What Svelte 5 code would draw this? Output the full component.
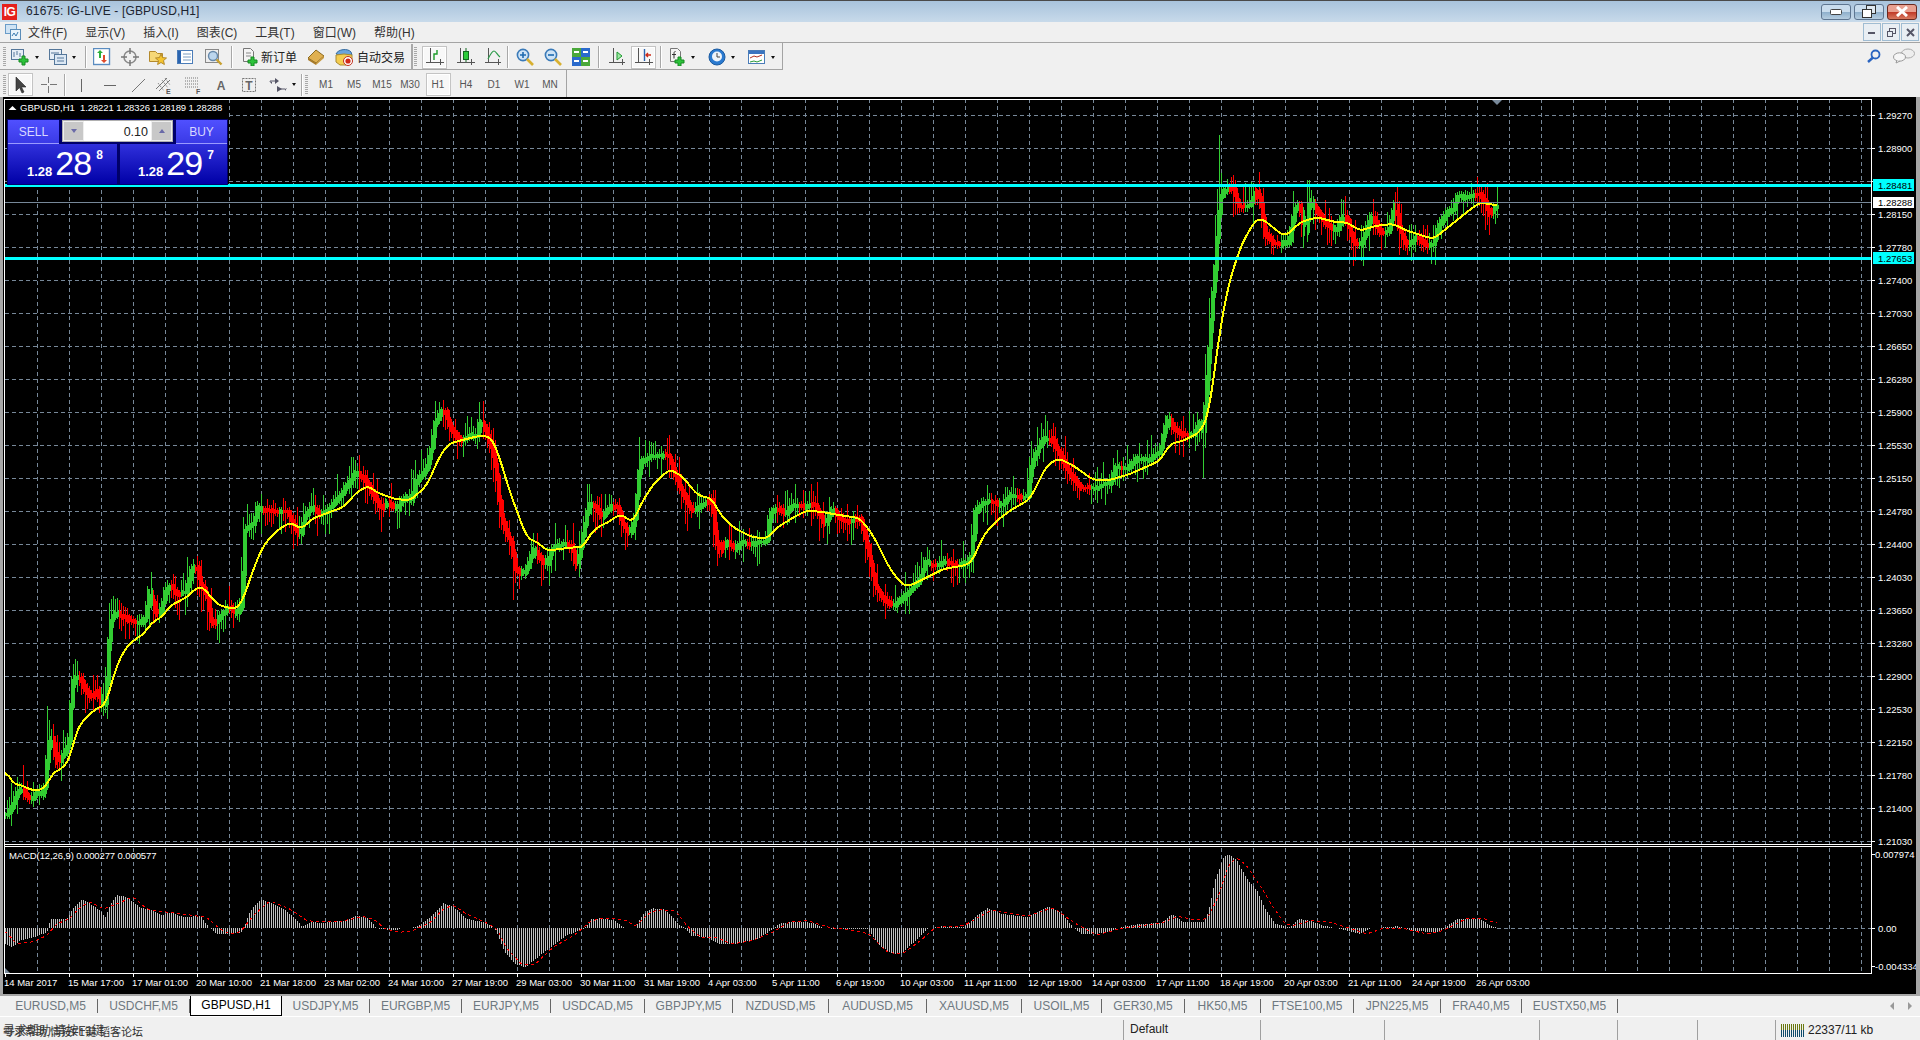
<script>
  function seg(ox, oy, sx, sy, a) {
    const r = [];
    for (let i = 0; i < a.length; i += 2) r.push([ox + a[i] / sx, oy + a[i + 1] / sy]);
    return r;
  }
  function interp(pts) {
    return (x) => {
      if (x <= pts[0][0]) return pts[0][1];
      for (let i = 1; i < pts.length; i++) {
        if (x <= pts[i][0]) {
          const [x0, y0] = pts[i - 1], [x1, y1] = pts[i];
          return y0 + ((y1 - y0) * (x - x0)) / Math.max(x1 - x0, 0.001);
        }
      }
      return pts[pts.length - 1][1];
    };
  }
  let seed = 20170426;
  function rnd() {
    seed = (seed + 0x6d2b79f5) | 0;
    let t = Math.imul(seed ^ (seed >>> 15), 1 | seed);
    t = (t + Math.imul(t ^ (t >>> 7), 61 | t)) ^ t;
    return ((t ^ (t >>> 14)) >>> 0) / 4294967296;
  }

  const pricePts = [
    ...seg(0, 480, 3, 3, [15,1010,25,1005,35,985,50,945,65,930,80,955,95,960,110,940,125,945,135,920,142,830,150,760,160,800,170,850,185,835,200,810,210,770,215,620,225,595,240,600,255,635,275,655,290,630,305,680,318,670,325,520,330,430,345,400,360,410,380,420,400,430,420,430,437,415,447,335,458,370,468,410,485,390,497,330,510,320,530,345,555,340,575,270,590,265,600,310,620,350,635,440,650,425,670,400,685,385,710,405,725,370,735,150,760,135,772,85,790,95,830,100,860,95,875,130,900,175,915,110,935,85,955,105,975,95,1000,70,1020,50,1050,5]),
    [355,472],[363,478],[370,490],[380,510],[387,503],[397,510],
    ...seg(400, 380, 3, 3, [0,370,20,355,35,370,45,310,60,295,80,265,95,200,105,130,125,95,135,100,150,150,175,185,195,180,215,165,230,175,240,120,255,155,275,210,290,290,300,400,315,455,335,500,345,570,370,590,385,560,400,510,420,540,440,560,455,510,490,500,515,500,530,570,545,490,565,375,585,385,605,420,625,390,650,380,670,440,690,465,705,420,720,250,745,235,775,235,805,230,825,290,850,350,875,395,895,385]),
    ...seg(700, 400, 3, 3, [0,320,35,300,45,400,55,460,75,430,95,440,110,450,125,425,150,435,175,425,200,425,210,340,230,325,255,345,275,320,300,320,320,325,345,315,360,350,375,375,395,330,420,360,450,370,480,360,495,420,510,490,525,560,550,600,580,620,600,600,630,575,660,540,675,490,700,500,735,490,770,500,800,490,815,470,825,340,850,310,880,310,905,320,930,290,950,290,980,300,995,190,1030,120,1055,120,1080,170,1105,220,1140,265,1180,265,1230,250,1245,205,1280,210,1310,180,1340,185,1380,160,1400,60,1420,90,1450,110,1480,105,1500,60,1510,100]),
    ...seg(1150, 120, 3, 3, [185,570,195,450,205,300,215,220,240,210,250,210,265,260,300,260,320,210,335,270,345,350,370,375,395,375,415,370,435,270,450,260,465,345,480,240,500,280,530,320,560,335,575,295,590,300,610,370,630,380,650,330,665,285,690,340,715,340,735,260,750,340,770,380,800,350,825,380,850,375,865,320,890,280,910,270,920,230,945,235,985,225,1005,250,1015,290,1035,260])
  ];
  const maPts = [
    ...seg(0, 480, 3, 3, [15,870,30,900,45,917,65,918,90,932,120,935,140,920,155,885,190,865,210,840,225,770,240,735,265,710,290,687,315,680,330,630,350,560,375,510,400,485,437,460,450,435,490,410,510,380,560,355,595,322,615,330,640,365,665,382,710,390,730,360,760,270,790,200,830,155,870,130,905,150,935,120,1000,95,1030,85,1070,40,1105,20,1130,40,1190,62]),
    ...seg(400, 380, 3, 3, [0,360,30,365,80,320,120,230,145,195,180,185,240,170,275,175,300,240,330,340,380,475,420,495,440,515,520,505,550,505,570,465,600,440,625,430,660,405,700,430,720,380,760,315,810,270,850,295,885,340,900,350]),
    ...seg(700, 400, 3, 3, [0,292,35,298,60,345,100,385,150,412,200,420,225,390,280,355,320,335,360,338,400,345,480,358,520,410,570,510,610,560,630,560,680,535,730,510,790,500,815,490,850,410,890,365,930,335,990,300,1040,200,1075,178,1120,200,1180,243,1230,243,1290,225,1380,185,1410,135,1450,125,1500,100,1525,50]),
    ...seg(1150, 120, 3, 3, [215,600,240,480,275,375,315,305,335,298,400,350,415,345,450,310,500,295,560,310,590,310,630,335,680,320,730,315,770,335,850,360,900,320,950,280,990,250,1035,258])
  ];
  const histPts = [
    ...seg(0, 830, 3, 3, [15,345,35,355,60,335,100,325,140,310,150,270,200,270,220,235,245,210,270,225,300,245,315,265,330,225,350,198,380,205,420,235,460,245,485,258,510,250,550,265,600,260,625,295,650,315,680,315,725,310,750,245,780,212,810,220,850,240,880,265,905,292,935,278,960,282,1000,278,1040,275,1065,260,1100,265,1130,298,1190,305]),
    ...seg(400, 840, 1.96, 3, [0,268,30,265,50,245,65,225,85,192,105,205,130,240,165,250,185,268,205,340,225,375,245,385,265,360,290,330,325,290,360,270,375,240,395,238,420,245,440,268,460,268,475,225,495,208,520,212,545,255,560,270,570,290,600,295,625,315,660,315,700,300,730,270,745,252,790,248,815,255,830,268,880,270,915,270,940,320,965,345,985,340,1020,290,1035,268,1060,262,1105,265,1130,230,1150,208,1180,225,1230,235,1270,202,1295,220,1320,268,1335,285,1365,285,1395,275,1410,265,1450,255,1490,252]),
    ...seg(1150, 830, 3, 3, [0,285,30,285,65,255,100,280,160,280,175,245,195,150,220,85,235,75,260,95,290,150,320,185,345,240,375,285,420,295,445,270,480,275,520,290,560,298,630,315,660,298,740,292,790,305,860,310,885,295,920,270,990,270,1020,290,1040,297])
  ];
  const sigPts = [
    ...seg(0, 830, 3, 3, [15,305,50,345,100,338,140,320,170,285,210,268,240,235,270,218,310,240,350,225,400,203,440,240,490,248,550,255,620,265,660,300,690,315,720,310,760,260,810,215,870,240,920,275,960,278,1030,276,1090,262,1130,275,1150,298,1190,308]),
    ...seg(400, 840, 1.96, 3, [0,280,25,275,60,250,85,210,105,198,130,225,165,248,190,270,210,330,240,378,265,375,300,325,345,285,375,245,400,238,440,242,462,262,490,220,510,212,540,215,565,265,590,295,620,295,650,315,690,305,730,280,765,248,800,245,840,265,880,272,920,285,955,340,985,345,1020,305,1050,265,1105,260,1160,212,1230,232,1280,205,1320,250,1365,288,1410,270,1490,252]),
    ...seg(1150, 830, 3, 3, [0,285,40,280,85,262,130,272,170,270,200,215,235,110,260,85,290,110,330,170,370,235,405,285,430,290,480,275,540,280,600,298,650,315,700,298,760,298,830,315,880,305,950,268,1000,268,1030,280])
  ];

  const py = interp(pricePts), my = interp(maPts), hy = interp(histPts), sy = interp(sigPts);
  const spikes = { 1219: [136, 0], 1203: [0, 479], 1353: [0, 267], 47: [707, 0], 409: [0, 517], 513: [0, 601] };
  let gBody = '', gWick = '', rBody = '', rWick = '';
  let up = true;
  let drift = 0;
  const START = 5, END = 1497;
  for (let x = START; x <= END; x += 2) {
    drift += (rnd() - 0.5) * 1.4;
    drift *= 0.85;
    const a = py(x - 2) + drift, b = py(x + 2) + drift;
    const d = py(x + 6) - py(x - 6);
    if (d < -0.6) up = true;
    else if (d > 0.6) up = false;
    else if (rnd() < 0.08) up = !up;
    const top = Math.round(Math.min(a, b) - 1 - rnd() * 2);
    const bot = Math.round(Math.max(a, b) + 1 + rnd() * 2);
    const r1 = rnd(), r2 = rnd();
    let wt = Math.round(top - 1 - r1 * r1 * r1 * 20 - rnd() * 2);
    let wb = Math.round(bot + 1 + r2 * r2 * r2 * 20 + rnd() * 2);
    for (const k of [x, x + 1]) {
      if (spikes[k]) {
        if (spikes[k][0]) wt = spikes[k][0];
        if (spikes[k][1]) wb = spikes[k][1];
      }
    }
    const body = `M${x + 1} ${top}V${bot}`;
    const wick = `M${x + 0.5} ${wt}V${wb}`;
    if (up) { gBody += body; gWick += wick; }
    else { rBody += body; rWick += wick; }
  }

  function smooth(fn, x0, x1, step, win) {
    const raw = [];
    for (let x = x0; x <= x1; x += step) raw.push(fn(x));
    return raw.map((_, i) => {
      let s = 0, n = 0;
      for (let j = Math.max(0, i - win); j <= Math.min(raw.length - 1, i + win); j++) { s += raw[j]; n++; }
      return `${x0 + i * step},${(s / n).toFixed(1)}`;
    }).join(' ');
  }
  const maLine = smooth(my, START, END, 2, 2);
  const sigLine = smooth(sy, START, END, 2, 1);

  let hist = '';
  for (let x = START; x <= END; x += 2) {
    const v = Math.round(hy(x));
    if (v === 929) continue;
    hist += `M${x + 0.5} 929V${v}`;
  }

  const vGrid = [];
  for (let x = 5 + 32; x < 1871; x += 32) vGrid.push(x + 0.5);
  const prices = ['1.29270','1.28900','1.28520','1.28150','1.27780','1.27400','1.27030','1.26650','1.26280','1.25900','1.25530','1.25150','1.24780','1.24400','1.24030','1.23650','1.23280','1.22900','1.22530','1.22150','1.21780','1.21400','1.21030'];
  const times = ['14 Mar 2017','15 Mar 17:00','17 Mar 01:00','20 Mar 10:00','21 Mar 18:00','23 Mar 02:00','24 Mar 10:00','27 Mar 19:00','29 Mar 03:00','30 Mar 11:00','31 Mar 19:00','4 Apr 03:00','5 Apr 11:00','6 Apr 19:00','10 Apr 03:00','11 Apr 11:00','12 Apr 19:00','14 Apr 03:00','17 Apr 11:00','18 Apr 19:00','20 Apr 03:00','21 Apr 11:00','24 Apr 19:00','26 Apr 03:00'];
  const tabNames = ['EURUSD,M5','USDCHF,M5','GBPUSD,H1','USDJPY,M5','EURGBP,M5','EURJPY,M5','USDCAD,M5','GBPJPY,M5','NZDUSD,M5','AUDUSD,M5','XAUUSD,M5','USOIL,M5','GER30,M5','HK50,M5','FTSE100,M5','JPN225,M5','FRA40,M5','EUSTX50,M5'];
  const tabEdges = [4,98,190,282,370,462,551,645,733,829,927,1022,1102,1185,1261,1354,1441,1522,1618];
  const tabs = tabNames.map((name, i) => ({ name, width: tabEdges[i + 1] - tabEdges[i] }));
  const menus = ['文件(F)','显示(V)','插入(I)','图表(C)','工具(T)','窗口(W)','帮助(H)'];
  const periods = ['M1','M5','M15','M30','H1','H4','D1','W1','MN'];
  const netBars = [0,1,2,3,4,5,6,7,8,9,10,11];
</script>

<div class="app">
  <header class="title">
    <span class="logo">IG</span>
    <span class="ttext">61675: IG-LIVE - [GBPUSD,H1]</span>
    <span class="wbtns">
      <span class="wb"><svg width="12" height="6"><rect x="0.5" y="0.5" width="11" height="5" rx="1" fill="#fff" stroke="#444"/></svg></span>
      <span class="wb"><svg width="14" height="13"><rect x="4.5" y="0.5" width="9" height="8" fill="#dfe8f0" stroke="#333"/><rect x="0.5" y="4.5" width="9" height="8" fill="#fff" stroke="#333"/></svg></span>
      <span class="wb close"><svg width="14" height="11"><path d="M2 1l10 9M12 1L2 10" stroke="#fff" stroke-width="3"/></svg></span>
    </span>
  </header>

  <nav class="menu">
    <svg class="micon" width="16" height="16" viewBox="0 0 16 16"><rect x="0.5" y="0.5" width="11" height="9" fill="#cfe3f4" stroke="#6a9cc8"/><rect x="5.5" y="5.5" width="10" height="10" fill="#eaf3fb" stroke="#5a8cb8"/><path d="M7 12l2-3 2 3 2-4" fill="none" stroke="#3a7ab0"/></svg>
    <div class="mitems">
      {#each menus as m}<span>{m}</span>{/each}
    </div>
    <div class="mdi">
      <span class="mb"><svg width="8" height="3"><rect width="7" height="2" y="1" fill="#556"/></svg></span>
      <span class="mb"><svg width="9" height="9"><rect x="2.5" y="0.5" width="6" height="5" fill="none" stroke="#556"/><rect x="0.5" y="3.5" width="5" height="5" fill="#e8eef4" stroke="#556"/></svg></span>
      <span class="mb"><svg width="9" height="9"><path d="M1 1l7 7M8 1L1 8" stroke="#556" stroke-width="2"/></svg></span>
    </div>
  </nav>

  <div class="row r1">
    <div class="tb tb1">
      <i class="grip"></i>
      <svg class="ic" viewBox="0 0 18 18"><rect x="0.5" y="1.5" width="12" height="10" fill="#e6eef6" stroke="#55779a"/><path d="M3 4v5M6 3v4M9 5v4" stroke="#55779a"/><path d="M10 8h3v3h3v3h-3v3h-3v-3H7v-3h3z" transform="translate(1 0)" fill="#2cc23a" stroke="#178a22"/></svg>
      <i class="drop l4"></i>
      <svg class="ic" viewBox="0 0 18 18"><rect x="0.5" y="1.5" width="12" height="10" fill="#e6eef6" stroke="#55779a"/><rect x="5.5" y="6.5" width="12" height="10" fill="#dce8f4" stroke="#55779a"/><path d="M2 5h8M8 10h7M8 13h7" stroke="#55779a"/></svg>
      <i class="drop l5"></i>
      <i class="sep"></i>
      <svg class="ic" viewBox="0 0 18 18"><rect x="0.5" y="0.5" width="16" height="16" fill="#fff" stroke="#5a8cc0" stroke-width="1.4"/><path d="M6 10V5H4l3-3 3 3H8v5z" fill="#2cb03a"/><path d="M10 7v5H8l3 3 3-3h-2V7z" fill="#e04a2a"/></svg>
      <svg class="ic" viewBox="0 0 18 18"><circle cx="9" cy="9" r="6" fill="none" stroke="#8a8a8a" stroke-width="1.5"/><path d="M9 0v6M9 12v6M0 9h6M12 9h6" stroke="#777" stroke-width="1.5"/></svg>
      <svg class="ic" viewBox="0 0 18 18"><path d="M0.5 3.5h6l2 2h5v8h-13z" fill="#f6d878" stroke="#b48a2c"/><path d="M12 6l1.6 3.6 3.9.4-3 2.6.9 3.9-3.4-2-3.4 2 .9-3.9-3-2.6 3.9-.4z" fill="#f4c430" stroke="#b48a2c"/></svg>
      <svg class="ic" viewBox="0 0 18 18"><rect x="0.5" y="2.5" width="15" height="13" fill="#fff" stroke="#4a7cb8"/><rect x="1" y="3" width="3" height="12" fill="#2a64b0"/><path d="M6 6h8M6 9h8M6 12h8" stroke="#7a9cc0"/></svg>
      <svg class="ic" viewBox="0 0 18 18"><rect x="0.5" y="1.5" width="13" height="13" fill="#eee" stroke="#888"/><circle cx="8" cy="8" r="4.5" fill="#bcd6ee" stroke="#6688aa" stroke-width="1.4"/><path d="M11.5 11.5l5 5" stroke="#c8a030" stroke-width="2.4"/></svg>
      <i class="sep s2"></i>
      <svg class="ic" viewBox="0 0 18 18"><path d="M1.5 0.5h7l3 3v10h-10z" fill="#f4f4f4" stroke="#777"/><path d="M4 5h5M4 8h5" stroke="#888"/><path d="M9 9h3v3h3v3h-3v3H9v-3H6v-3h3z" fill="#2cc23a" stroke="#178a22"/></svg>
      <span class="tlabel l9">新订单</span>
      <svg class="ic" viewBox="0 0 18 18"><path d="M1 10l8-8 8 6-8 7z" fill="#e0b050" stroke="#8a6a20"/><path d="M1 10l8 5v2l-8-5z" fill="#a87a28"/><path d="M9 15l8-7v2l-8 7z" fill="#c89a40"/></svg>
      <svg class="ic" viewBox="0 0 18 18"><path d="M1 6c2-5 12-6 15-2l1 3-8 1z" fill="#6aa4dc" stroke="#346a9e"/><path d="M1 7l8-1 8 1v7l-6 3H5l-4-3z" fill="#f4cd50" stroke="#a88a30"/><circle cx="13" cy="13" r="4.5" fill="#fff" stroke="#c03020"/><circle cx="13" cy="13" r="2.6" fill="#d02818"/></svg>
      <span class="tlabel l6">自动交易</span>
      <i class="tbend"></i>
      <i class="grip l9"></i>
      <span class="on l5"><svg class="ic" viewBox="0 0 18 18"><path d="M4.5 0v15M0 14.5h18M14.5 11v6" stroke="#555" fill="none"/><path d="M8 12V6h3V2" stroke="#1a9a28" stroke-width="1.4" fill="none"/></svg></span>
      <svg class="ic" viewBox="0 0 18 18"><path d="M3.5 0v15M0 14.5h18M14.5 11v6" stroke="#555" fill="none"/><rect x="6.5" y="3.5" width="5" height="8" fill="#2ccc3a" stroke="#136a20"/><path d="M9 0v3M9 12v2" stroke="#136a20"/></svg>
      <svg class="ic" viewBox="0 0 18 18"><path d="M3.5 0v15M0 14.5h16M13.5 11v6" stroke="#555" fill="none"/><path d="M3 11c2-4 4-8 6-8s3 4 6 6" stroke="#2a9a48" stroke-width="1.2" fill="none"/></svg>
      <i class="sep s3"></i>
      <svg class="ic" viewBox="0 0 18 18"><circle cx="7" cy="7" r="5.6" fill="#cfe4f6" stroke="#3a7ab8" stroke-width="1.6"/><path d="M4 7h6M7 4v6" stroke="#1e6ab0" stroke-width="1.6"/><path d="M11 11l6 6" stroke="#d8b030" stroke-width="2.6"/></svg>
      <svg class="ic" viewBox="0 0 18 18"><circle cx="7" cy="7" r="5.6" fill="#cfe4f6" stroke="#3a7ab8" stroke-width="1.6"/><path d="M4 7h6" stroke="#1e6ab0" stroke-width="1.6"/><path d="M11 11l6 6" stroke="#d8b030" stroke-width="2.6"/></svg>
      <svg class="ic" viewBox="0 0 18 18"><rect x="0" y="0" width="9" height="9" fill="#4aa83a"/><rect x="9" y="0" width="9" height="9" fill="#2a6acc"/><rect x="0" y="9" width="9" height="9" fill="#2a6acc"/><rect x="9" y="9" width="9" height="9" fill="#4aa83a"/><path d="M2 4h5M11 4h5M2 13h5M11 13h5" stroke="#fff" stroke-width="2"/></svg>
      <i class="sep s2"></i>
      <svg class="ic" viewBox="0 0 18 18"><path d="M4.5 0v15M0 14.5h16M13.5 11v6" stroke="#555" fill="none"/><path d="M8 4l5 4-5 4z" fill="#9ee8a4" stroke="#1e9a30"/></svg>
      <span class="on l6"><svg class="ic" viewBox="0 0 18 18"><path d="M3.5 0v15M0 14.5h18M14.5 11v6" stroke="#555" fill="none"/><path d="M9.5 1v12" stroke="#2a64b0" stroke-width="1.4"/><path d="M11 7h5M13 5l-2 2 2 2" stroke="#cc2a18" stroke-width="1.4" fill="none"/></svg></span>
      <i class="sep s3"></i>
      <svg class="ic" viewBox="0 0 18 18"><path d="M1.5 0.5h7l3 3v10h-10z" fill="#f4f4f4" stroke="#777"/><path d="M6.5 3.5c-1.5 0-1.5 1-1.5 3v4M3 6.5h4" stroke="#333" fill="none"/><path d="M9 9h3v3h3v3h-3v3H9v-3H6v-3h3z" fill="#2cc23a" stroke="#178a22"/></svg>
      <i class="drop l6"></i>
      <svg class="ic l1p" viewBox="0 0 18 18"><circle cx="9" cy="9" r="8" fill="#2a7ad0" stroke="#1a5aa0"/><circle cx="9" cy="8.5" r="5" fill="#eef4fa"/><path d="M9 5v4h3" stroke="#444" fill="none"/></svg>
      <i class="drop l5"></i>
      <svg class="ic l1p" viewBox="0 0 18 18"><rect x="0.5" y="2.5" width="16" height="13" fill="#fff" stroke="#4a7cb8"/><rect x="1" y="3" width="15" height="3" fill="#3a74c0"/><path d="M2 10l4-2 3 1 5-2" stroke="#b03020" fill="none"/><path d="M2 14l4-1 3 1 5-2" stroke="#2a9a38" fill="none"/></svg>
      <i class="drop l5"></i>
    </div>
    <div class="tright">
      <svg width="14" height="14" viewBox="0 0 14 14"><circle cx="8.5" cy="5.5" r="4" fill="none" stroke="#2a64c0" stroke-width="1.8"/><path d="M6 8.5L1 13" stroke="#2a64c0" stroke-width="2.4"/></svg>
      <svg width="22" height="16" viewBox="0 0 22 16"><ellipse cx="15" cy="5.5" rx="6.5" ry="4.5" fill="#eee" stroke="#aaa"/><ellipse cx="6.5" cy="9" rx="6" ry="4.2" fill="#f6f6f6" stroke="#999"/><path d="M4 12l-1 3 4-2" fill="#f6f6f6" stroke="#999"/></svg>
    </div>
  </div>

  <div class="row r2">
    <div class="tb tb2">
      <i class="grip"></i>
      <span class="on l3"><svg class="ic" viewBox="0 0 18 18"><path d="M4 1v14l3.5-3.5 2.5 5.5 2-1-2.5-5H14z" fill="#444" stroke="#222" stroke-width="0.6"/></svg></span>
      <svg class="ic l3" viewBox="0 0 18 18"><path d="M8.5 1v6M8.5 10v7M1 8.5h6M10 8.5h7" stroke="#777"/></svg>
      <i class="sep s4"></i>
      <svg class="ic" viewBox="0 0 18 18"><path d="M9.5 3v13" stroke="#666"/></svg>
      <svg class="ic l0" viewBox="0 0 18 18"><path d="M3 9.5h12" stroke="#666"/></svg>
      <svg class="ic" viewBox="0 0 18 18"><path d="M3 16L16 3" stroke="#777"/></svg>
      <svg class="ic l2" viewBox="0 0 18 18"><path d="M1 13L12 2M4 15L15 4" stroke="#777"/><path d="M3 7l6 8M7 4l6 8M10 2l5 7" stroke="#777" stroke-dasharray="1 1"/><text x="11" y="18" class="ilet">E</text></svg>
      <svg class="ic l0" viewBox="0 0 18 18"><path d="M1 2h14M1 5h14M1 8h14M1 11h14" stroke="#777" stroke-dasharray="1 1"/><text x="12" y="18" class="ilet">F</text></svg>
      <svg class="ic" viewBox="0 0 18 18"><text x="9" y="14" text-anchor="middle" class="ialpha">A</text></svg>
      <svg class="ic" viewBox="0 0 18 18"><rect x="2.5" y="2.5" width="13" height="13" fill="none" stroke="#777" stroke-dasharray="2 1"/><text x="9" y="13.5" text-anchor="middle" class="ialpha">T</text></svg>
      <svg class="ic l0" viewBox="0 0 18 18"><path d="M6 2l4 3-4 3zM3 6l-3-1 3 3M8 10l5 3-5 3zM16 13l2-1-2 3z" fill="#556"/><path d="M1 5h5M9 13h7" stroke="#556"/></svg>
      <i class="drop l5"></i>
      <i class="sep s5"></i>
      <i class="grip l7"></i>
      <div class="periods">
        {#each periods as p}<span class:on={p === 'H1'}>{p}</span>{/each}
      </div>
    </div>
  </div>

  <main class="chart">
    <svg class="plot" width="1913" height="898" viewBox="3 97 1913 898">
      <path d={vGrid.map((x) => `M${x} 100V974`).join('')} class="grid" />
      <path d={prices.map((_, i) => `M5 ${116.5 + i * 33}H1871`).join('')} class="grid" />
      <path d="M1497 929.5H1871" class="grid" />

      <path d={gWick} class="w g" />
      <path d={rWick} class="w r" />
      <path d={gBody} class="b g" />
      <path d={rBody} class="b r" />
      <polyline points={maLine} class="ma" />

      <path d="M5 203.5H1871" class="bid" />
      <rect x="5" y="185" width="1866" height="3" class="cy" />
      <rect x="5" y="258" width="1866" height="3" class="cy" />

      <path d={hist} class="hist" />
      <polyline points={sigLine} class="sig" />

      <path d="M4.5 100.5H1871.5V974.5H4.5Z" class="frame" />
      <path d="M4.5 845.5H1871.5M4.5 847.5H1871.5" class="frame" />
      <path d={prices.map((_, i) => `M1871 ${116.5 + i * 33}h4`).join('')} class="frame" />
      <path d={times.map((_, i) => `M${5.5 + i * 64} 974v4`).join('')} class="frame" />
      <path d="M1871 855.5h4M1871 929.5h4M1871 967.5h4" class="frame" />
      <path d="M5 969l5 5H5z" class="lsg" />
      <path d="M1492 101h10l-5 5z" class="lsg" />

      <rect x="5" y="101" width="224" height="17" class="blank" />

      <g class="txt">
        {#each prices as p, i}<text x="1878" y={120 + i * 33}>{p}</text>{/each}
        {#each times as t, i}<text x={4 + i * 64} y="986.5">{t}</text>{/each}
        <text x="1875" y="858.5">0.007974</text>
        <text x="1878" y="932.5">0.00</text>
        <text x="1875" y="970.5">-0.004334</text>
        <path d="M8.5 111l4-4 4 4z" class="hdtri" />
        <text x="20" y="111.5">GBPUSD,H1</text>
        <text x="80" y="111.5" class="tight">1.28221 1.28326 1.28189 1.28288</text>
        <text x="9" y="859.5" class="tight">MACD(12,26,9) 0.000277 0.000577</text>
      </g>

      <rect x="1873" y="180" width="41" height="12" class="cy" />
      <rect x="1873" y="253" width="41" height="12" class="cy" />
      <rect x="1873" y="198" width="41" height="11" class="wlabel" />
      <g class="dark">
        <text x="1878" y="189.5">1.28481</text>
        <text x="1878" y="262.5">1.27653</text>
        <text x="1878" y="207">1.28288</text>
      </g>
    </svg>

    <section class="trade">
      <div class="ttop">
        <span class="side">SELL</span>
        <div class="qty">
          <span class="step"><i class="tdn"></i></span>
          <span class="val">0.10</span>
          <span class="step"><i class="tup"></i></span>
        </div>
        <span class="side">BUY</span>
      </div>
      <div class="tbot">
        <div class="quote q1"><b>1.28</b><span class="big">28</span><sup>8</sup></div>
        <div class="quote q2"><b>1.28</b><span class="big">29</span><sup>7</sup></div>
      </div>
    </section>
  </main>

  <div class="tabs">
    {#each tabs as t}<span class="tab" class:sel={t.name === 'GBPUSD,H1'} style="width:{t.width}px">{t.name}</span>{/each}
    <span class="arrows"><i class="al"></i><i class="ar"></i></span>
  </div>

  <footer class="status">
    <div class="cell first">
      <span class="ghost a">寻求帮助,请按F1键</span>
      <span class="ghost b">零求帮助,情按F1键 韬客论坛</span>
      <span class="def">Default</span>
    </div>
    <div class="cell"></div>
    <div class="cell"></div>
    <div class="cell"></div>
    <div class="cell"></div>
    <div class="cell"></div>
    <div class="cell"></div>
    <div class="cell net">
      <span class="bars">{#each netBars as b}<i></i>{/each}</span>
      <span>22337/11 kb</span>
    </div>
  </footer>
</div>

<style>
  :global(body) { margin: 0; background: #f0f0f0; overflow: hidden; }
  .app {
    width: 1920px; height: 1040px; display: flex; flex-direction: column;
    background: #a6a6a6; font-family: "Liberation Sans", "Noto Sans CJK SC", sans-serif; color: #222;
  }
  i { display: block; font-style: normal; }

  .title {
    height: 22px; box-sizing: border-box; display: flex; align-items: center;
    border-top: 1px solid #4a4a4a;
    background: linear-gradient(#a8c3dc, #c8daea);
  }
  .logo {
    width: 15px; height: 16px; margin-left: 2px; background: #e5201c; color: #fff;
    font: bold 12px/16px "Liberation Sans", sans-serif; text-align: center; letter-spacing: -0.5px;
  }
  .ttext { margin-left: 9px; margin-bottom: 2px; font-size: 12px; letter-spacing: 0.15px; color: #1c2430; }
  .wbtns { margin-left: auto; margin-right: 3px; display: flex; gap: 3px; }
  .wb {
    width: 30px; height: 16px; box-sizing: border-box; display: flex; align-items: center; justify-content: center;
    border: 1px solid #5e7590; border-radius: 3px;
    background: linear-gradient(#c9dced 0 48%, #8fb0cc 52%, #b6cde0);
  }
  .wb.close { border-color: #6a2a20; background: linear-gradient(#e8a090 0 48%, #c03a28 52%, #d87a60); }

  .menu {
    height: 21px; box-sizing: border-box; display: flex; align-items: center;
    background: #f0f0f0; border-bottom: 1px solid #a4a4a4; padding-left: 5px;
  }
  .micon { flex: none; }
  .mitems { display: flex; gap: 18px; margin-left: 7px; margin-bottom: 2px; font-size: 12px; color: #333; }
  .mdi { margin-left: auto; display: flex; gap: 1px; margin-right: 1px; }
  .mb {
    width: 18px; height: 18px; box-sizing: border-box; display: flex; align-items: center; justify-content: center;
    border: 1px solid #a0bcd2; background: #e9eef3;
  }

  .row { background: #f0f0f0; display: flex; }
  .r1 { height: 27px; }
  .r2 { height: 27px; }
  .tb {
    display: flex; align-items: center; gap: 10px; box-sizing: border-box; padding-top: 2px;
    border-bottom: 1px solid #a4a4a4; border-right: 1px solid #a4a4a4;
  }
  .tb1 { width: 783px; }
  .tb2 { width: 567px; border-bottom: 0; }
  .grip {
    width: 3px; height: 20px; margin-left: 3px; flex: none;
    background: repeating-linear-gradient(#a8a8a8 0 1px, transparent 1px 2px);
  }
  .grip:first-child { margin-right: -5px; }
  .ic { width: 18px; height: 18px; flex: none; display: block; }
  .sep { width: 2px; height: 22px; background: #a8a8a8; margin: 0 -4px 0 -1px; flex: none; border-right: 1px solid #fff; box-sizing: border-box; }
  .sep.s2 { margin: 0 -1px 0 -2px; }
  .sep.s3 { margin: 0 -3px 0 -6px; }
  .sep.s4 { margin: 0 -4px 0 -4px; }
  .sep.s5 { margin: 0 -1px 0 -5px; }
  .tbend { width: 2px; height: 26px; background: #a8a8a8; flex: none; margin-left: -4px; }
  .drop { width: 0; height: 0; border-style: solid; border-color: #111 transparent transparent; border-width: 3px 2.5px 0; flex: none; }
  .tlabel { font-size: 12px; color: #222; flex: none; margin-bottom: 2px; }
  .on {
    width: 25px; height: 23px; box-sizing: border-box; display: flex; align-items: center; justify-content: center; flex: none;
    border: 1px solid #c4c4c4; background: #f8f8f8;
    outline: 1px solid #fff; outline-offset: -2px;
  }
  .l0 { margin-left: 1px; }
  .l1p { margin-left: 3px; }
  .l2 { margin-left: -2px; }
  .l3 { margin-left: -3px; }
  .l4 { margin-left: -4px; }
  .l5 { margin-left: -5px; }
  .l6 { margin-left: -6px; }
  .l7 { margin-left: -7px; }
  .l9 { margin-left: -9px; }
  .grip.l9 { margin-left: -9px; }
  .grip.l7 { margin-left: -7px; }
  .tright { margin-left: auto; display: flex; align-items: center; gap: 12px; margin-right: 5px; padding-bottom: 1px; }
  .tright svg { display: block; }
  .ilet { font: bold 7px "Liberation Sans", sans-serif; fill: #555; }
  .ialpha { font: bold 12px "Liberation Sans", sans-serif; fill: #666; }
  .periods { display: flex; align-items: center; font-size: 10px; color: #555; margin-left: -6px; }
  .periods span { width: 28px; height: 23px; display: flex; align-items: center; justify-content: center; box-sizing: border-box; }
  .periods span.on { width: 25px; margin: 0 1.5px; }

  .chart {
    position: relative; flex: 1; min-height: 0; margin: 0 4px 2px 3px; background: #000;
    border-top: 0; overflow: hidden;
  }
  .plot { display: block; position: absolute; left: 0; bottom: 0; }
  .grid { stroke: #778899; stroke-width: 1; stroke-dasharray: 4 3; fill: none; shape-rendering: crispEdges; }
  .w { stroke-width: 1; fill: none; shape-rendering: crispEdges; }
  .b { stroke-width: 2; fill: none; shape-rendering: crispEdges; }
  .g { stroke: #32cd32; }
  .r { stroke: #ff0000; }
  .ma { fill: none; stroke: #ffff00; stroke-width: 2; shape-rendering: crispEdges; stroke-linejoin: round; }
  .bid { stroke: #778899; fill: none; shape-rendering: crispEdges; }
  .cy { fill: #00ffff; }
  .hist { stroke: #c0c0c0; stroke-width: 1; fill: none; shape-rendering: crispEdges; }
  .sig { fill: none; stroke: #ff0000; stroke-width: 1; stroke-dasharray: 3 3; shape-rendering: crispEdges; }
  .frame { stroke: #fff; fill: none; shape-rendering: crispEdges; }
  .lsg { fill: #778899; }
  .blank { fill: #000; }
  .txt text { fill: #fff; font: 9.5px "Liberation Sans", sans-serif; }
  .txt text.tight { letter-spacing: -0.1px; }
  .hdtri { fill: #fff; }
  .wlabel { fill: #fff; }
  .dark text { fill: #000; font: 9.5px "Liberation Sans", sans-serif; }

  .trade {
    position: absolute; left: 4px; top: 22px; width: 221px; height: 66px; background: #00006a;
    display: flex; flex-direction: column; box-sizing: border-box; padding: 1px;
  }
  .ttop { display: flex; height: 24px; justify-content: space-between; }
  .side {
    width: 51px; height: 24px; box-sizing: border-box; color: #d8d8ff; font-size: 12px; line-height: 25px; text-align: center;
    background: linear-gradient(#5050ff, #3a3ae6); border-bottom: 1px solid #9a9aff;
  }
  .qty {
    width: 111px; height: 22px; display: flex; background: #fff; border: 1px solid #b0b0b0; box-sizing: border-box;
  }
  .step { width: 21px; background: #c8c8c8; display: flex; align-items: center; justify-content: center; border: 1px solid #eee; box-sizing: border-box; }
  .tdn, .tup { width: 0; height: 0; border: 3.5px solid transparent; }
  .tdn { border-top: 4px solid #6a6aa8; border-bottom: 0; }
  .tup { border-bottom: 4px solid #6a6aa8; border-top: 0; }
  .val { flex: 1; text-align: right; font-size: 12.5px; line-height: 22px; padding-right: 3px; color: #222; }
  .tbot { display: flex; justify-content: space-between; flex: 1; }
  .quote {
    width: 109px; position: relative; box-sizing: border-box; color: #fff; display: flex; align-items: flex-end;
    background: linear-gradient(#3030dc, #0000a6);
  }
  .q2 { width: 107px; }
  .quote b { font-size: 13px; margin-left: 19px; margin-bottom: 5px; line-height: 15px; }
  .q2 b { margin-left: 18px; }
  .big { font-size: 34px; letter-spacing: -1px; line-height: 36px; margin-left: 3px; margin-bottom: 3px; }
  .quote sup { font-size: 12px; font-weight: bold; margin-left: 5px; align-self: flex-start; line-height: 12px; margin-top: 5px; }

  .tabs {
    height: 20px; box-sizing: border-box; display: flex; align-items: center; background: #f0f0f0;
    padding-left: 4px; font-size: 12px; color: #6e7880; flex: none;
  }
  .tab { line-height: 14px; border-right: 1px solid #666; box-sizing: border-box; flex: none; text-align: center; }
  .tab.sel {
    height: 20px; line-height: 19px; background: #fff; color: #000;
    border-style: solid; border-color: #000; border-width: 0 1px 1px 1px;
  }
  .arrows { margin-left: auto; display: flex; gap: 14px; margin-right: 8px; }
  .al, .ar { width: 0; height: 0; border: 4px solid transparent; }
  .al { border-right: 4px solid #999; border-left: 0; }
  .ar { border-left: 4px solid #999; border-right: 0; }

  .status {
    height: 24px; flex: none; display: grid; grid-template-columns: 1123px 137px 124px 155px 78px 80px 78px 1fr;
    background: #f0f0f0; border-top: 1px solid #fff; box-sizing: border-box; font-size: 12px;
  }
  .cell { border-left: 1px solid #a0a0a0; margin-top: 3px; }
  .cell.first { border-left: 0; position: relative; }
  .ghost { position: absolute; white-space: nowrap; }
  .ghost.a { left: 3px; top: 1px; font-size: 12px; color: #444; }
  .ghost.b { left: 3px; top: 3px; font-size: 11px; color: #333; }
  .def { position: absolute; left: 1130px; top: 2px; color: #222; }
  .net { display: flex; align-items: center; gap: 4px; padding-left: 5px; font-size: 12px; }
  .bars { display: flex; gap: 1px; align-items: flex-end; height: 13px; }
  .bars i { width: 1px; height: 13px; background: linear-gradient(#6b7a10 0 50%, #0e4a6a 50%); }
</style>
